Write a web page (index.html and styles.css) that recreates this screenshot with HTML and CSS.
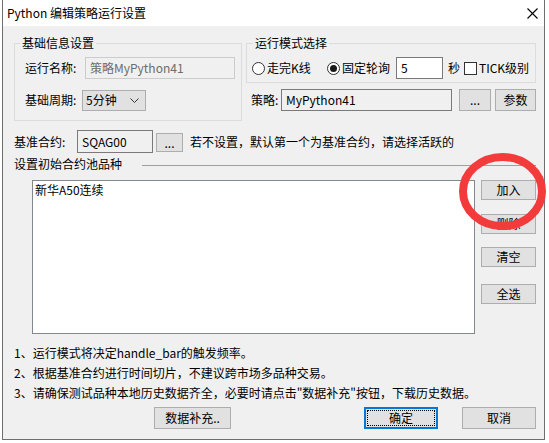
FILE: index.html
```html
<!DOCTYPE html>
<html lang="zh-CN">
<head>
<meta charset="utf-8">
<title>Python 编辑策略运行设置</title>
<link rel="stylesheet" href="styles.css">
</head>
<body>
<div class="window">
  <div class="titlebar">
    <span class="title">Python 编辑策略运行设置</span>
    <svg class="close" width="11" height="11" viewBox="0 0 11 11"><path d="M0.5 0.5 L10.5 10.5 M10.5 0.5 L0.5 10.5" stroke="#000" stroke-width="1.1" fill="none"/></svg>
  </div>
  <div class="content">
    <div class="top">
      <div class="group g1">
        <span class="legend">基础信息设置</span>
        <div class="row r1">
          <span class="lbl w60">运行名称:</span>
          <span class="edit disabled w150">策略MyPython41</span>
        </div>
        <div class="row r2">
          <span class="lbl w57">基础周期:</span>
          <span class="combo">
            <span>5分钟</span>
            <svg width="9" height="5" viewBox="0 0 9 5"><path d="M0.5 0.5 L4.5 4.5 L8.5 0.5" stroke="#333" stroke-width="1" fill="none"/></svg>
          </span>
        </div>
      </div>
      <div class="rightcol">
        <div class="group g2">
          <span class="legend">运行模式选择</span>
          <div class="row r1 mode">
            <span class="radio"></span><span class="opt1">走完K线</span>
            <span class="radio checked"></span><span class="opt2">固定轮询</span>
            <span class="edit white w47">5</span>
            <span class="sec">秒</span>
            <span class="check"></span><span class="tick">TICK级别</span>
          </div>
        </div>
        <div class="row strat">
          <span class="lbl w30">策略:</span>
          <span class="edit ro w171">MyPython41</span>
          <span class="btn b-dots">...</span>
          <span class="btn b-param">参数</span>
        </div>
      </div>
    </div>
    <div class="row bench">
      <span class="lbl w63">基准合约:</span>
      <span class="edit ro w76">SQAG00</span>
      <span class="btn b-small">...</span>
      <span class="hint">若不设置，默认第一个为基准合约，请选择活跃的</span>
    </div>
    <div class="pool-head">
      <span>设置初始合约池品种</span>
      <span class="etched"></span>
    </div>
    <div class="pool">
      <div class="list">
        <div class="item">新华A50连续</div>
      </div>
      <div class="side">
        <span class="btn sb s1">加入</span>
        <span class="btn sb s2">删除</span>
        <span class="btn sb s3">清空</span>
        <span class="btn sb s4">全选</span>
      </div>
    </div>
    <div class="notes">
      <p>1、运行模式将决定handle_bar的触发频率。</p>
      <p>2、根据基准合约进行时间切片，不建议跨市场多品种交易。</p>
      <p>3、请确保测试品种本地历史数据齐全，必要时请点击"数据补充"按钮，下载历史数据。</p>
    </div>
    <div class="footer">
      <span class="btn f-data">数据补充..</span>
      <span class="btn f-ok">确定</span>
      <span class="btn f-cancel">取消</span>
    </div>
  </div>
</div>
<svg class="annot" width="549" height="443" viewBox="0 0 549 443"><ellipse cx="502.5" cy="191.5" rx="39.5" ry="34.5" fill="none" stroke="#f33b3b" stroke-width="8"/></svg>
</body>
</html>
```
FILE: styles.css
```css
* { box-sizing: border-box; }
html, body { margin: 0; padding: 0; }
body {
  position: relative;
  width: 549px;
  height: 443px;
  overflow: hidden;
  background: #fff;
  font-family: "Noto Sans CJK SC", "Microsoft YaHei", sans-serif;
  font-size: 12px;
  line-height: 14px;
  color: #000;
}
.window {
  margin-left: 2px;
  width: 543px;
  height: 440px;
  border: 1px solid #6e6e6e;
  border-top: none;
  background: #f0f0f0;
  display: flex;
  flex-direction: column;
}
.titlebar {
  height: 26px;
  flex: none;
  background: #fff;
  display: flex;
  align-items: center;
  justify-content: space-between;
  padding-left: 4px;
  padding-right: 6px;
}
.title { font-size: 12px; }
.content {
  padding: 10px 8px 0 11px;
  display: flex;
  flex-direction: column;
}
.top { display: flex; gap: 4px; }
.group {
  margin-top: 7px;
  border: 1px solid #dcdcdc;
  display: flex;
  flex-direction: column;
  align-items: flex-start;
}
.legend {
  margin-top: -8px;
  height: 14px;
  padding: 0 2px;
  background: #f0f0f0;
  white-space: nowrap;
}
.g1 { width: 228px; height: 78px; }
.g1 .legend { margin-left: 5px; }
.g2 { width: 290px; height: 40px; }
.g2 .legend { margin-left: 6px; }
.rightcol { display: flex; flex-direction: column; }

.row { display: flex; align-items: center; white-space: nowrap; }
.g1 .row { padding-left: 10px; }
.r1 { margin-top: 7px; height: 22px; }
.r2 { margin-top: 10px; height: 22px; }
.lbl { flex: none; }
.w60 { width: 60px; }
.w57 { width: 57px; }
.w30 { width: 30px; }
.w63 { width: 63px; }

.edit {
  flex: none;
  display: flex;
  align-items: center;
  height: 22px;
  padding-left: 4px;
  border: 1px solid #7a7a7a;
  background: #f0f0f0;
}
.edit.disabled { border-color: #cccccc; color: #6d6d6d; }
.edit.white { background: #fff; }
.w150 { width: 150px; }
.w47 { width: 47px; }
.w171 { width: 171px; }
.w76 { width: 76px; height: 23px; }

.combo {
  flex: none;
  width: 64px;
  height: 21px;
  border: 1px solid #adadad;
  background: #e1e1e1;
  display: flex;
  align-items: center;
  justify-content: space-between;
  padding: 0 6px 0 3px;
}

.mode { padding-left: 5px; }
.radio {
  flex: none;
  width: 13px;
  height: 13px;
  border: 1px solid #333;
  border-radius: 50%;
  background: #fff;
  position: relative;
}
.radio.checked::after {
  content: "";
  position: absolute;
  left: 2px; top: 2px;
  width: 7px; height: 7px;
  border-radius: 50%;
  background: #1a1a1a;
}
.opt1 { margin-left: 2px; width: 60px; }
.opt2 { margin-left: 2px; width: 54px; }
.sec { margin-left: 5px; width: 16px; }
.check {
  flex: none;
  width: 13px;
  height: 13px;
  border: 1px solid #333;
  background: #fff;
}
.tick { margin-left: 2px; }

.strat { margin-top: 6px; height: 22px; padding-left: 5px; }

.btn {
  flex: none;
  display: flex;
  align-items: center;
  justify-content: center;
  border: 1px solid #adadad;
  background: #e1e1e1;
  white-space: nowrap;
}
.b-dots { margin-left: 7px; width: 32px; height: 22px; }
.b-param { margin-left: 4px; width: 41px; height: 22px; }

.bench { margin-top: 9px; height: 23px; }
.b-small { margin-left: 3px; width: 27px; height: 19px; margin-top: 2px; }
.hint { margin-left: 7px; }

.pool-head { margin-top: 4px; height: 14px; display: flex; align-items: center; }
.etched {
  margin-left: 20px;
  flex: 1;
  height: 1px;
  background: #a0a0a0;
  margin-top: 2px;
}

.pool { margin-top: 9px; display: flex; align-items: flex-start; }
.list {
  margin-left: 18px;
  width: 443px;
  height: 154px;
  border: 1px solid #828790;
  background: #fff;
  padding: 2px 0 0 2px;
}
.item { height: 14px; }
.side { margin-left: 6px; display: flex; flex-direction: column; }
.sb { width: 55px; height: 20px; }
.s2 { margin-top: 14px; }
.s3 { margin-top: 13px; }
.s4 { margin-top: 17px; }

.notes { margin-top: 9px; }
.notes p { margin: 0; line-height: 20px; height: 20px; white-space: nowrap; }

.footer { margin-top: 4px; display: flex; height: 22px; }
.footer .btn { height: 22px; }
.f-data { margin-left: 140px; width: 77px; }
.f-ok {
  margin-left: 133px;
  width: 74px;
  border: 2px solid #0078d7;
  position: relative;
}
.f-ok::after {
  content: "";
  position: absolute;
  inset: 1px;
  border: 1px dotted #000;
}
.f-cancel { margin-left: 24px; width: 74px; }

.annot { position: absolute; left: 0; top: 0; pointer-events: none; }
```
